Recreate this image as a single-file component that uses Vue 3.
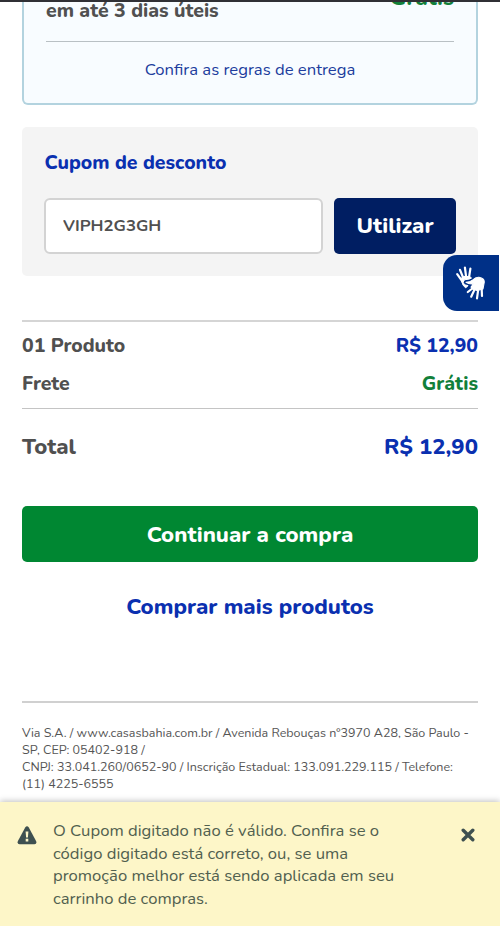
<script setup>
import { ref } from 'vue'

const coupon = ref('VIPH2G3GH')
const toastOpen = ref(true)
const toastLines = [
  'O Cupom digitado não é válido. Confira se o',
  'código digitado está correto, ou, se uma',
  'promoção melhor está sendo aplicada em seu',
  'carrinho de compras.',
]
const companyLines = [
  'Via S.A. / www.casasbahia.com.br / Avenida Rebouças n°3970 A28, São Paulo -',
  'SP, CEP: 05402-918 /',
  'CNPJ: 33.041.260/0652-90 / Inscrição Estadual: 133.091.229.115 / Telefone:',
  '(11) 4225-6555',
]
</script>

<template>
  <div class="page">
    <div class="topbar"></div>
    <main class="content">
      <section class="delivery">
        <div class="delivery-row">
          <span class="deadline">em até 3 dias úteis</span>
          <span class="delivery-price">Grátis</span>
        </div>
        <a class="rules">Confira as regras de entrega</a>
      </section>

      <section class="coupon">
        <h2 class="coupon-title">Cupom de desconto</h2>
        <div class="coupon-form">
          <input v-model="coupon" class="coupon-input" type="text" />
          <button class="coupon-button">Utilizar</button>
        </div>
      </section>

      <section class="summary">
        <div class="row"><span>01 Produto</span><span class="price">R$ 12,90</span></div>
        <div class="row"><span>Frete</span><span class="free">Grátis</span></div>
      </section>
      <div class="total"><span>Total</span><span class="price">R$ 12,90</span></div>

      <button class="continue">Continuar a compra</button>
      <a class="more">Comprar mais produtos</a>

      <footer class="company">
        <div v-for="line in companyLines" :key="line">{{ line }}</div>
      </footer>
    </main>

    <button class="libras">
      <svg width="34" height="36" viewBox="0 0 34 36" fill="none" stroke="#fff" stroke-linecap="round" stroke-linejoin="round">
        <path d="M7.5 13 10 11.5 15.5 11.5 17.5 13 15.5 14 10.6 14.8 9 17.2 10.6 19.8 14 20.6 12.4 22.4 11.5 22.8Q8.5 20.5 7.8 17Z" fill="#fff" stroke-width="1" />
        <path d="M8.5 16.5 3.2 9.2M9.5 13.5 6 4.8M12.2 12.5 10.9 2.5M15 12.5 16.4 3.6" stroke-width="2.2" />
        <path d="M12 17.3Q16 17.2 19.3 14.6 21.5 12 25 12.3 30.3 13.3 30.3 17L29 24 23 25.5 18.5 24 17 22.2 19.5 18.8Q15 19.4 12 17.3Z" fill="#fff" stroke-width="1.1" />
        <path d="M19 23 13.8 27M20.8 24 17.2 31.7M24.3 24 23 33.3M27.6 22 28 31" stroke-width="2.2" />
      </svg>
    </button>

    <aside v-if="toastOpen" class="toast">
      <svg class="warning" width="20" height="19" viewBox="0 0 20 19">
        <path d="M8.2 1.5Q10 -1 11.8 1.5L19.2 15.2Q20 18 17.5 18.2H2.5Q0 18 .8 15.2Z" fill="#3e5050" />
        <path d="M8.6 5.5h2.8l-.5 6H9.1ZM8.7 12.8h2.6v2.6H8.7Z" fill="#fdf6c8" />
      </svg>
      <p class="toast-text">
        <span v-for="line in toastLines" :key="line">{{ line }}</span>
      </p>
      <button class="close" @click="toastOpen = false">
        <svg width="14" height="14" viewBox="0 0 14 14" stroke="#3e5050" stroke-width="3.4" stroke-linecap="round">
          <path d="M2.2 2.2 11.8 11.8M11.8 2.2 2.2 11.8" />
        </svg>
      </button>
    </aside>
  </div>
</template>

<style scoped>
* { box-sizing: border-box; }
.page {
  position: relative;
  height: 926px;
  overflow: hidden;
  background: #fff;
  color: #505050;
  font-family: Nunito, 'Noto Sans', sans-serif;
  white-space: nowrap;
}
button { border: 0; padding: 0; font-family: inherit; cursor: pointer; }
.topbar { position: absolute; z-index: 2; top: 0; left: 0; right: 0; height: 2px; background: #303035; }
.content { display: flex; flex-direction: column; padding: 0 22px; }
.delivery {
  height: 105px;
  padding: 0 22px;
  border: solid #b3d3df;
  border-width: 0 2px 2px;
  border-radius: 0 0 6px 6px;
  background: #f8fcff;
  display: flex;
  flex-direction: column;
}
.delivery-row {
  height: 42px;
  display: flex;
  justify-content: space-between;
  border-bottom: 1px solid #b9c0c4;
  font-weight: 800;
}
.deadline { font-size: 19.44px; line-height: 22px; }
.delivery-price { margin-top: -13px; line-height: 22px; font-size: 22.2px; color: #12803a; }
.rules { margin-top: 16px; line-height: 24px; font-size: 16.67px; text-align: center; color: #203d9d; }
.coupon { margin-top: 22px; height: 149px; padding: 23px 22px 0; border-radius: 5px; background: #f4f4f4; }
.coupon-title { margin: 0; padding-left: .5px; line-height: 26px; font-size: 19.44px; font-weight: 800; color: #0a30b0; }
.coupon-form { margin-top: 22px; display: flex; gap: 11px; }
.coupon-input {
  width: 279px;
  height: 56px;
  padding: 0 17px 1px;
  border: 2px solid #d3d3d3;
  border-radius: 6px;
  background: #fff;
  color: #505050;
  font: 700 16.75px Nunito, 'Noto Sans', sans-serif;
  outline: 0;
}
.coupon-button { width: 122px; height: 56px; border-radius: 5px; background: #001e62; color: #fff; font-size: 22.2px; font-weight: 800; }
.summary {
  margin-top: 44px;
  height: 89px;
  padding-top: 5px;
  border-top: 2px solid #d5d5d5;
  border-bottom: 1px solid #c4c4c4;
  font-size: 19.44px;
  font-weight: 800;
}
.row { height: 37.5px; line-height: 37.5px; display: flex; justify-content: space-between; }
.price { color: #0a30b0; }
.free { color: #12803a; }
.total { height: 76px; display: flex; justify-content: space-between; align-items: center; font-size: 22.2px; font-weight: 800; }
.continue { margin-top: 21px; height: 56px; padding-top: 1px; border-radius: 5px; background: #008732; color: #fff; font-size: 22.2px; font-weight: 800; }
.more { margin-top: 30px; height: 30px; line-height: 30px; text-align: center; color: #0a30b0; font-size: 22.2px; font-weight: 800; }
.company { margin-top: 79px; padding-top: 21px; border-top: 2px solid #d0d0d0; font-size: 12.5px; line-height: 17.1px; color: #555; }
.libras {
  position: absolute;
  top: 255px;
  left: 443px;
  width: 56px;
  height: 56px;
  border-radius: 14px 0 0 14px;
  background: #003087;
  display: flex;
  align-items: center;
  justify-content: center;
}
.toast {
  position: absolute;
  left: 0;
  right: 0;
  bottom: 0;
  height: 124px;
  padding: 18px 25px 0 17px;
  display: flex;
  align-items: flex-start;
  background: #fdf6c8;
  box-shadow: 0 -1px 6px rgba(0, 0, 0, .25);
}
.warning { margin-top: 6px; }
.toast-text { margin: 0 0 0 16px; display: flex; flex-direction: column; align-items: flex-start; font-size: 16.67px; line-height: 22.7px; color: #51604f; }
.close { margin: 8px 0 0 auto; height: 14px; background: none; line-height: 0; }
</style>
